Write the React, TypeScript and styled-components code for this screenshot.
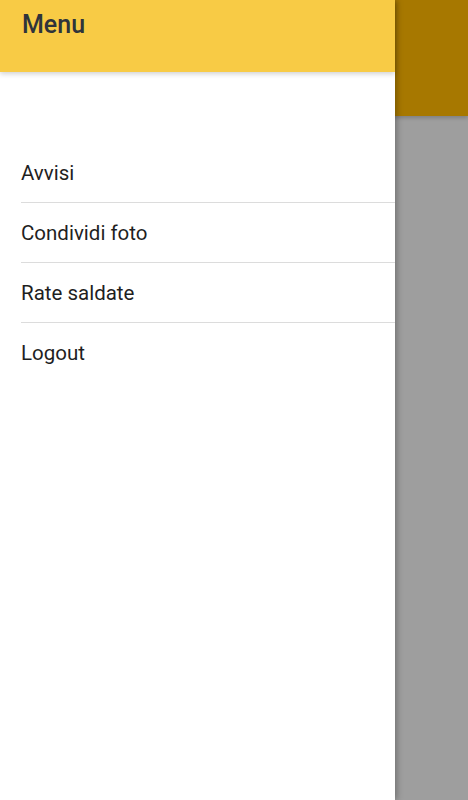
import React from "react";
import styled, { createGlobalStyle } from "styled-components";

const GlobalStyle = createGlobalStyle`
  html, body {
    margin: 0;
    padding: 0;
    height: 100%;
  }
  body {
    font-family: Roboto, "Liberation Sans", sans-serif;
    background: #f0f0f0;
  }
  #root {
    height: 100%;
  }
`;

const Screen = styled.div`
  position: relative;
  width: 100%;
  height: 100vh;
  overflow: hidden;
  background: #f0f0f0;
`;

const AppBar = styled.div`
  height: 116px;
  background: #fdb600;
  box-shadow: 0 2px 4px rgba(0, 0, 0, 0.2);
`;

const Backdrop = styled.div`
  position: absolute;
  inset: 0;
  background: rgba(0, 0, 0, 0.34);
`;

const Drawer = styled.aside`
  position: absolute;
  top: 0;
  left: 0;
  bottom: 0;
  width: 395px;
  background: #ffffff;
  box-shadow: 2px 0 6px rgba(0, 0, 0, 0.28);
  display: flex;
  flex-direction: column;
`;

const DrawerHeader = styled.header`
  height: 72px;
  box-sizing: border-box;
  padding: 10px 22px 0;
  background: #f8cb45;
  box-shadow: 0 2px 5px rgba(0, 0, 0, 0.18);
  position: relative;
  z-index: 1;
`;

const Title = styled.h1`
  margin: 0;
  font-size: 25px;
  line-height: 29px;
  font-weight: 500;
  color: #2f343b;
`;

const NavList = styled.ul`
  list-style: none;
  margin: 71px 0 0;
  padding: 0 0 0 21px;
`;

const NavItem = styled.li<{ $last?: boolean }>`
  height: 60px;
  box-sizing: border-box;
  display: flex;
  align-items: center;
  font-size: 20.5px;
  line-height: 24px;
  color: #1f1f1f;
  border-bottom: ${(p) => (p.$last ? "none" : "1px solid #dcdcdc")};
  padding-bottom: ${(p) => (p.$last ? "1px" : "0")};
`;

const items = ["Avvisi", "Condividi foto", "Rate saldate", "Logout"];

export default function App() {
  return (
    <>
      <GlobalStyle />
      <Screen>
        <AppBar />
        <Backdrop />
        <Drawer>
          <DrawerHeader>
            <Title>Menu</Title>
          </DrawerHeader>
          <NavList>
            {items.map((label, i) => (
              <NavItem key={label} $last={i === items.length - 1}>
                {label}
              </NavItem>
            ))}
          </NavList>
        </Drawer>
      </Screen>
    </>
  );
}
